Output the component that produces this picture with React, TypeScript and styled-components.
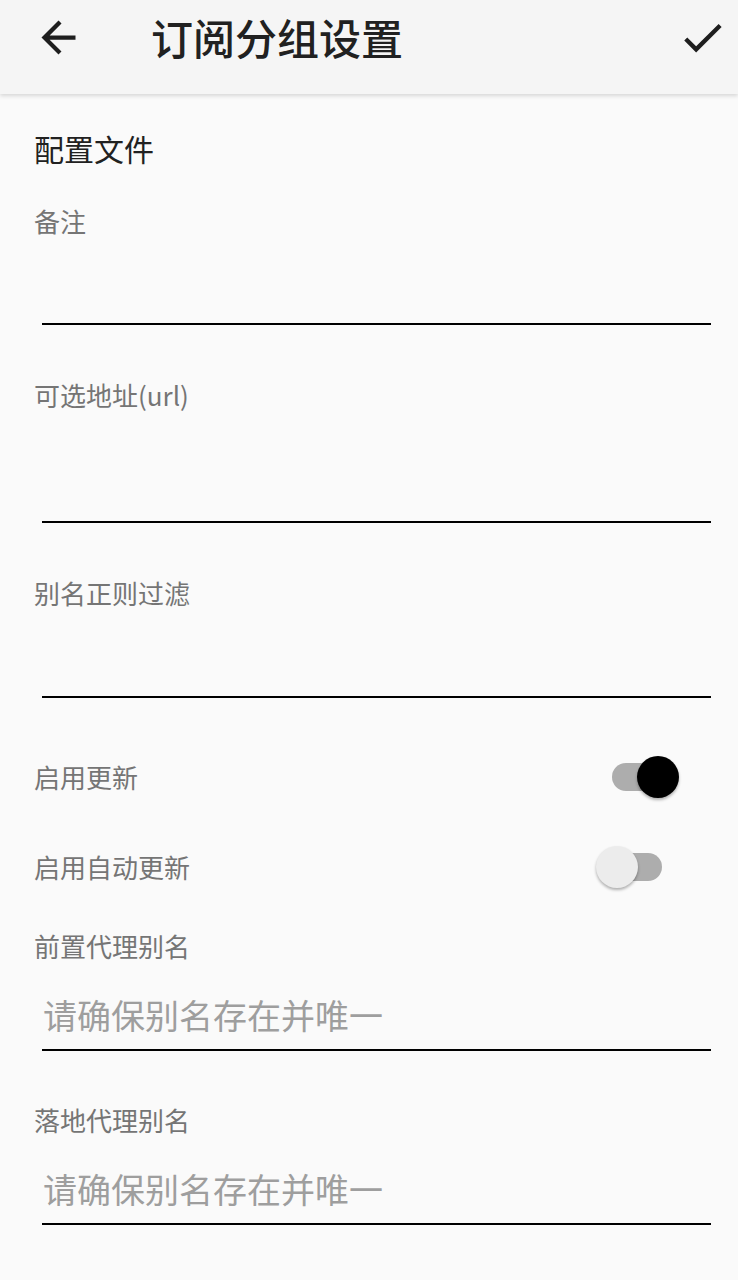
import React, { useState } from 'react';
import styled, { createGlobalStyle } from 'styled-components';

const GlobalStyle = createGlobalStyle`
  html, body {
    margin: 0;
    padding: 0;
    background: #fafafa;
    font-family: "Noto Sans CJK SC", "Noto Sans", Roboto, sans-serif;
  }
`;

const Page = styled.div`
  min-height: 1280px;
  background: #fafafa;
`;

const Toolbar = styled.header`
  height: 94px;
  box-sizing: border-box;
  padding: 0 10px 20px 33px;
  display: flex;
  align-items: center;
  background: #f5f5f5;
  box-shadow: 0 2px 4px rgba(0, 0, 0, 0.14);
  position: relative;
  z-index: 1;
`;

const IconButton = styled.button`
  width: 51px;
  height: 51px;
  padding: 0;
  border: none;
  background: none;
  display: flex;
  align-items: center;
  justify-content: center;
  color: #1e1e1e;
  cursor: pointer;

  svg {
    width: 51px;
    height: 51px;
    fill: currentColor;
  }
`;

const Title = styled.h1`
  margin: 0 0 0 67px;
  flex: 1;
  font-size: 42px;
  line-height: 1;
  font-weight: 500;
  color: #212121;
`;

const Form = styled.main`
  padding: 34px 27px 0 34px;
`;

const SectionTitle = styled.div`
  font-size: 30px;
  line-height: 40px;
  color: #212121;
  margin-bottom: 35px;
`;

const Field = styled.div<{ $gap?: number }>`
  margin-bottom: ${p => p.$gap ?? 52}px;
`;

const Label = styled.div`
  font-size: 26px;
  line-height: 36px;
  color: #757575;
`;

const Input = styled.input<{ $height: number }>`
  display: block;
  box-sizing: border-box;
  width: calc(100% - 8px);
  height: ${p => p.$height}px;
  margin-left: 8px;
  padding: 28px 0 13px 1px;
  border: none;
  border-bottom: 2px solid #000;
  background: transparent;
  outline: none;
  font-family: inherit;
  font-size: 34px;
  line-height: 44px;
  color: #212121;

  &::placeholder {
    color: #9e9e9e;
  }
`;

const SwitchList = styled.div`
  margin: 34px 0 16px;
`;

const SwitchRow = styled.div`
  height: 90px;
  display: flex;
  align-items: center;
  justify-content: space-between;
`;

const SwitchTrack = styled.button<{ $inset: number }>`
  position: relative;
  width: 59px;
  height: 28px;
  margin-right: ${p => p.$inset}px;
  padding: 0;
  border: none;
  border-radius: 14px;
  background: #adadad;
  cursor: pointer;
`;

const Thumb = styled.span<{ $on: boolean }>`
  position: absolute;
  top: -7px;
  left: ${p => (p.$on ? 25 : -7)}px;
  width: 42px;
  height: 42px;
  border-radius: 50%;
  background: ${p => (p.$on ? '#000' : '#ececec')};
  box-shadow: 0 2px 3px rgba(0, 0, 0, 0.3);
`;

const Toggle: React.FC<{ on: boolean; inset: number; onChange: () => void }> = ({ on, inset, onChange }) => (
  <SwitchTrack $inset={inset} onClick={onChange} role="switch" aria-checked={on}>
    <Thumb $on={on} />
  </SwitchTrack>
);

const App: React.FC = () => {
  const [update, setUpdate] = useState(true);
  const [autoUpdate, setAutoUpdate] = useState(false);

  return (
    <Page>
      <GlobalStyle />
      <Toolbar>
        <IconButton aria-label="back">
          <svg viewBox="0 0 24 24">
            <path d="M20 11H7.83l5.59-5.59L12 4l-8 8 8 8 1.41-1.41L7.83 13H20v-2z" />
          </svg>
        </IconButton>
        <Title>订阅分组设置</Title>
        <IconButton aria-label="save">
          <svg viewBox="0 0 24 24">
            <path d="M9 16.17L4.83 12l-1.42 1.41L9 19 21 7l-1.41-1.41z" />
          </svg>
        </IconButton>
      </Toolbar>

      <Form>
        <SectionTitle>配置文件</SectionTitle>

        <Field>
          <Label>备注</Label>
          <Input $height={86} />
        </Field>
        <Field>
          <Label>可选地址(url)</Label>
          <Input $height={110} />
        </Field>
        <Field $gap={0}>
          <Label>别名正则过滤</Label>
          <Input $height={87} />
        </Field>

        <SwitchList>
          <SwitchRow>
            <Label>启用更新</Label>
            <Toggle on={update} inset={40} onChange={() => setUpdate(v => !v)} />
          </SwitchRow>
          <SwitchRow>
            <Label>启用自动更新</Label>
            <Toggle on={autoUpdate} inset={49} onChange={() => setAutoUpdate(v => !v)} />
          </SwitchRow>
        </SwitchList>

        <Field $gap={51}>
          <Label>前置代理别名</Label>
          <Input $height={87} placeholder="请确保别名存在并唯一" />
        </Field>
        <Field>
          <Label>落地代理别名</Label>
          <Input $height={87} placeholder="请确保别名存在并唯一" />
        </Field>
      </Form>
    </Page>
  );
};

export default App;
